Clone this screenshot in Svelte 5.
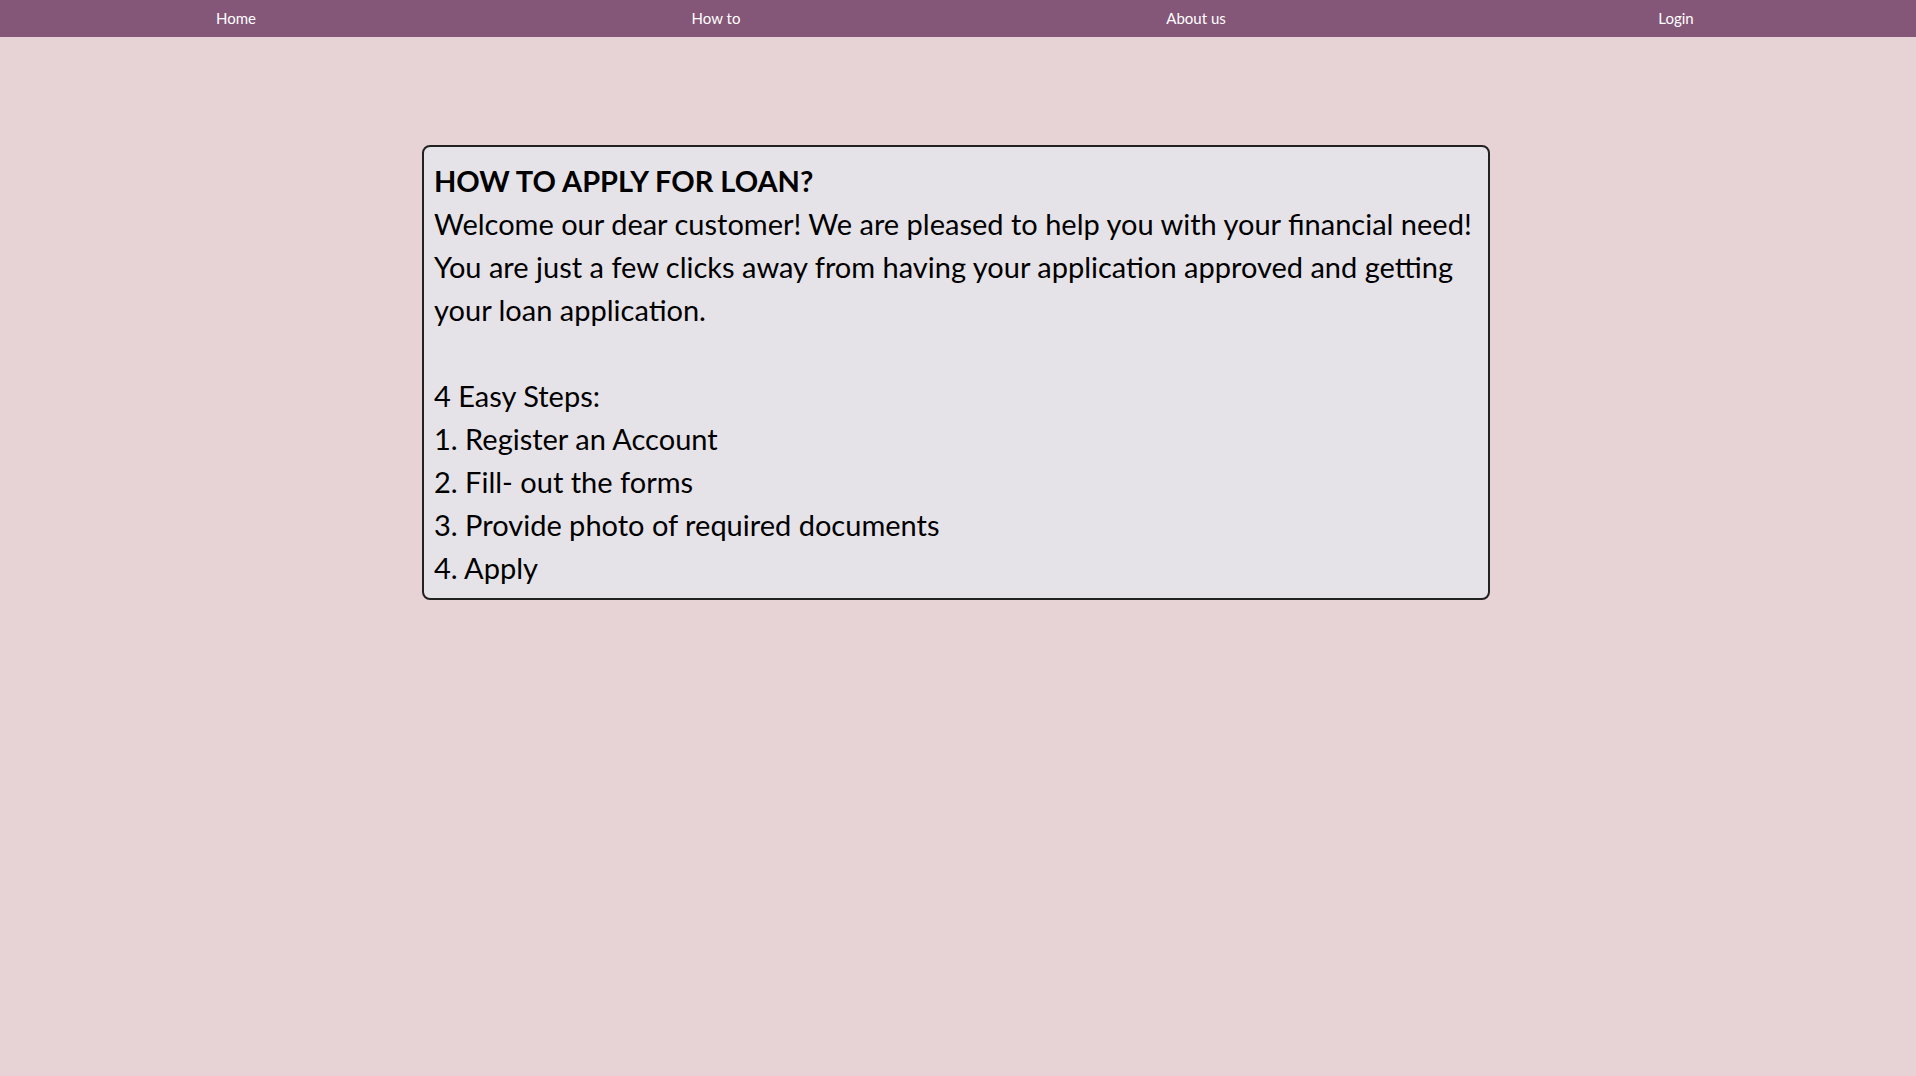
<script>
  const links = ['Home', 'How to', 'About us', 'Login'];
  const steps = [
    'Register an Account',
    'Fill- out the forms',
    'Provide photo of required documents',
    'Apply',
  ];
</script>

<nav>
  {#each links as link}
    <a href="#{link.toLowerCase().replace(' ', '-')}">{link}</a>
  {/each}
</nav>

<main>
  <section class="card">
    <h1>HOW TO APPLY FOR LOAN?</h1>
    <p>
      Welcome our dear customer! We are pleased to help you with your financial need! You are just a
      few clicks away from having your application approved and getting your loan application.
    </p>
    <h2>4 Easy Steps:</h2>
    <ol>
      {#each steps as step, i}
        <li>{i + 1}. {step}</li>
      {/each}
    </ol>
  </section>
</main>

<style>
  :global(body) {
    margin: 0;
    background: #e7d3d5;
    font-family: Lato, sans-serif;
    color: #000;
  }

  nav {
    display: grid;
    grid-template-columns: repeat(4, 1fr);
    column-gap: 8px;
    padding-right: 4px;
    background: #845678;
  }

  nav a {
    padding: 8px 0;
    font-size: 15px;
    line-height: 21px;
    color: #fff;
    text-align: center;
    text-decoration: none;
  }

  main {
    display: flex;
    justify-content: center;
    padding: 108px 16px 16px;
  }

  .card {
    box-sizing: border-box;
    width: 100%;
    max-width: 1068px;
    margin-right: 4px;
    padding: 12px 10px 9px;
    border: 2px solid #212121;
    border-radius: 8px;
    background: #e6e3e8;
    font-size: 29px;
    line-height: 43px;
  }

  h1,
  h2,
  p,
  ol {
    margin: 0;
    padding: 0;
    font-size: inherit;
  }

  h2 {
    margin-top: 43px;
    font-weight: 400;
  }

  ol {
    list-style: none;
  }
</style>
